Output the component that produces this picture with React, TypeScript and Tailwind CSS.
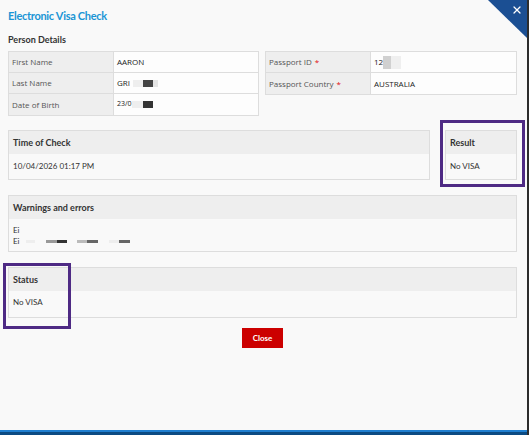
import { X } from "lucide-react";

const lato = { fontFamily: "Lato, 'Open Sans', sans-serif" };

const Row = ({ label, required, children, last }: { label: string; required?: boolean; children: React.ReactNode; last?: boolean }) => (
    <div className={`flex h-[21px] ${last ? '' : 'border-b border-[#dddddd]'}`}>
        <div className="w-[105px] shrink-0 bg-[#eeeeee] border-r border-[#dddddd] flex items-center pl-[3px] text-[8px] text-[#555555]">
            {label}
            {required && <span className="text-[#e01010] ml-[3px]">*</span>}
        </div>
        <div className="flex-1 bg-[#fdfdfd] flex items-center pl-[3px] text-[8px] text-[#222222]">{children}</div>
    </div>
);

const Panel = ({ title, children, className = "" }: { title: string; children: React.ReactNode; className?: string }) => (
    <div className={`border border-[#dddddd] flex flex-col ${className}`} style={lato}>
        <div className="h-[23px] bg-[#eeeeee] flex items-center pl-[4px] text-[9px] font-bold text-[#333333]">{title}</div>
        <div className="flex-1 px-[4px] text-[8px] text-[#333333]">{children}</div>
    </div>
);

export default function App() {
    return (
        <div className="relative w-[529px] h-[435px] bg-[#f9f9f9] overflow-hidden border-r-2 border-[#2d2d2d] flex flex-col" style={{ fontFamily: "'Open Sans', sans-serif" }}>
            {/* corner close */}
            <div className="absolute top-0 right-0 w-[39px] h-[38px] bg-[#1b4f93] [clip-path:polygon(0_0,100%_0,100%_100%)]" />
            <X className="absolute top-[4px] right-[4px] w-[12px] h-[12px] text-white" strokeWidth={2.5} />

            <div className="flex-1 flex flex-col pl-[8px] pr-[10px] pt-[9px]">
                <div className="h-[14px] flex items-center text-[11px] font-bold text-[#1b95d5] tracking-[-0.3px]" style={lato}>Electronic Visa Check</div>
                <div className="mt-[10px] h-[14px] flex items-center text-[9px] font-bold text-[#333333]" style={lato}>Person Details</div>

                <div className="mt-[4px] grid grid-cols-[251px_252px] gap-[6px]">
                    <div className="border border-[#dddddd]">
                        <Row label="First Name">AARON</Row>
                        <Row label="Last Name">
                            GRI
                            <span className="ml-[3px] w-[10px] h-[7px] bg-[#eeeeee]" />
                            <span className="w-[10px] h-[7px] bg-[#444444]" />
                            <span className="w-[5px] h-[7px] bg-[#e4e4e4]" />
                        </Row>
                        <Row label="Date of Birth" last>
                            <span className="text-[7px]">23/0</span>
                            <span className="w-[11px] h-[7px] bg-[#eeeeee]" />
                            <span className="w-[10px] h-[7px] bg-[#333333]" />
                        </Row>
                    </div>
                    <div className="self-start border border-[#dddddd]">
                        <Row label="Passport ID" required>
                            12
                            <span className="w-[8px] h-[13px] bg-[#d0d0d0]" />
                            <span className="w-[10px] h-[13px] bg-[#efefef]" />
                        </Row>
                        <Row label="Passport Country" required last>AUSTRALIA</Row>
                    </div>
                </div>

                <div className="mt-[14px] flex gap-[15px]">
                    <Panel title="Time of Check" className="flex-1 h-[50px]">
                        <div className="h-[24px] flex items-center">10/04/2026 01:17 PM</div>
                    </Panel>
                    <Panel title="Result" className="w-[72px] h-[50px]">
                        <div className="h-[24px] flex items-center">No VISA</div>
                    </Panel>
                </div>

                <Panel title="Warnings and errors" className="mt-[15px] h-[57px]">
                    <div className="pt-[6px] flex flex-col leading-[11px] text-[#333333]">
                        <span>Ei</span>
                        <span className="flex items-center">
                            Ei
                            <span className="ml-[6px] w-[9px] h-[3px] bg-[#eeeeee]" />
                            <span className="ml-[11px] w-[11px] h-[3px] bg-[#999999]" />
                            <span className="w-[10px] h-[3px] bg-[#333333]" />
                            <span className="ml-[10px] w-[10px] h-[3px] bg-[#bbbbbb]" />
                            <span className="w-[11px] h-[3px] bg-[#666666]" />
                            <span className="ml-[11px] w-[10px] h-[3px] bg-[#eeeeee]" />
                            <span className="w-[11px] h-[3px] bg-[#666666]" />
                        </span>
                    </div>
                </Panel>

                <Panel title="Status" className="mt-[15px] h-[51px]">
                    <div className="h-[22px] flex items-center">No VISA</div>
                </Panel>

                <div className="mt-[10px] flex justify-center">
                    <button className="w-[41px] h-[20px] bg-[#cc0000] text-white text-[8px] font-bold" style={lato}>Close</button>
                </div>
            </div>

            <div className="h-[2px] bg-[#1f7fd0]" />
            <div className="h-[3px] bg-[#0c4b82]" />

            {/* highlight annotations */}
            <div className="absolute left-[440px] top-[120px] w-[85px] h-[67px] border-[3px] border-[#4e2a84]" />
            <div className="absolute left-[3px] top-[263px] w-[68px] h-[66px] border-[3px] border-[#4e2a84]" />
        </div>
    );
}
